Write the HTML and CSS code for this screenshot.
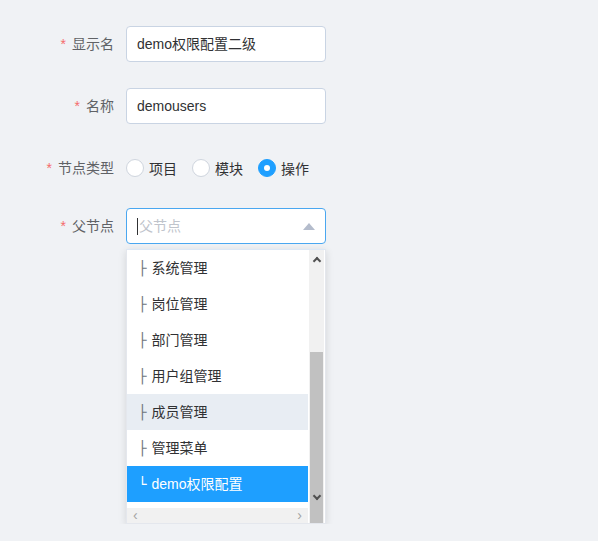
FILE: index.html
```html
<!DOCTYPE html>
<html lang="zh">
<head>
<meta charset="utf-8">
<link rel="stylesheet" href="styles.css">
</head>
<body>
<div class="form">
  <div class="row r1">
    <label class="label"><span class="req">*</span>显示名</label>
    <div class="input">demo权限配置二级</div>
  </div>
  <div class="row r2">
    <label class="label"><span class="req">*</span>名称</label>
    <div class="input">demousers</div>
  </div>
  <div class="row r3">
    <label class="label"><span class="req">*</span>节点类型</label>
    <div class="radios">
      <span class="radio"><span class="circle"></span>项目</span>
      <span class="radio"><span class="circle"></span>模块</span>
      <span class="radio checked"><span class="circle"></span>操作</span>
    </div>
  </div>
  <div class="row r4">
    <label class="label"><span class="req">*</span>父节点</label>
    <div class="input select"><span class="caret"></span><span class="ph">父节点</span><span class="tri"></span></div>
  </div>
  <div class="panel">
    <div class="panel-body">
      <div class="list">
        <div class="item"><span class="br">├</span>系统管理</div>
        <div class="item"><span class="br">├</span>岗位管理</div>
        <div class="item"><span class="br">├</span>部门管理</div>
        <div class="item"><span class="br">├</span>用户组管理</div>
        <div class="item hover"><span class="br">├</span>成员管理</div>
        <div class="item"><span class="br">├</span>管理菜单</div>
        <div class="item selected"><span class="br">└</span>demo权限配置</div>
        <div class="pad"></div>
        <div class="hbar"><span class="arr">‹</span><span class="arr">›</span></div>
      </div>
      <div class="vbar">
        <span class="up"></span>
        <span class="vthumb"></span>
        <span class="down"></span>
      </div>
    </div>
  </div>
</div>
</body>
</html>
```
FILE: styles.css
```css
html, body {
  margin: 0;
  padding: 0;
  background: #f0f2f5;
  font-family: "Liberation Sans", "Noto Sans CJK SC", sans-serif;
  font-size: 14px;
  color: #606266;
}
.form {
  padding-top: 26px;
}
.row {
  display: flex;
  align-items: center;
}
.r2 { margin-top: 26px; }
.r3 { margin-top: 26px; height: 36px; }
.r4 { margin-top: 22px; }
.label {
  width: 126px;
  padding-right: 12px;
  box-sizing: border-box;
  text-align: right;
  color: #606266;
  line-height: 36px;
}
.req {
  color: #f56c6c;
  margin-right: 6px;
}
.input {
  width: 200px;
  height: 36px;
  box-sizing: border-box;
  border: 1px solid #c9d4e3;
  border-radius: 4px;
  background: #fff;
  padding: 0 10px;
  line-height: 34px;
  color: #303133;
}
.radios {
  display: flex;
  align-items: center;
}
.radio {
  display: flex;
  align-items: center;
  margin-right: 15px;
  color: #303133;
}
.circle {
  width: 16px;
  height: 16px;
  border: 1px solid #cfd5de;
  border-radius: 50%;
  background: #fff;
  margin-right: 5px;
  position: relative;
}
.checked .circle {
  background: #1e9fff;
  border-color: #1e9fff;
}
.checked .circle::after {
  content: "";
  position: absolute;
  left: 5px;
  top: 5px;
  width: 6px;
  height: 6px;
  border-radius: 50%;
  background: #fff;
}
.select {
  border-color: #4aa7f0;
  display: flex;
  align-items: center;
}
.caret {
  width: 1px;
  height: 17px;
  background: #303133;
}
.ph {
  color: #c0c4cc;
  margin-left: 1px;
  flex: 1;
}
.tri {
  width: 0;
  height: 0;
  border-left: 6px solid transparent;
  border-right: 6px solid transparent;
  border-bottom: 7px solid #b4bccc;
}
.panel {
  margin-left: 126px;
  margin-top: 5px;
  width: 200px;
  height: 275px;
  box-sizing: border-box;
  border: 1px solid #e4e7ed;
  border-top-color: #dde8f5;
  background: #fff;
  box-shadow: 0 2px 8px rgba(0, 0, 0, 0.12);
  overflow: hidden;
}
.panel-body {
  display: flex;
  height: 273px;
}
.list {
  width: 181px;
  display: flex;
  flex-direction: column;
}
.item {
  height: 36px;
  line-height: 36px;
  padding-left: 11px;
  color: #303133;
  white-space: nowrap;
  flex: none;
}
.br {
  font-family: "DejaVu Sans", sans-serif;
  color: #6f757d;
  margin-right: 5px;
}
.hover {
  background: #e8edf3;
}
.selected {
  background: #1e9fff;
  color: #fff;
}
.selected .br {
  color: #fff;
}
.pad {
  height: 6px;
  flex: none;
}
.hbar {
  height: 15px;
  flex: none;
  background: #f1f1f1;
  display: flex;
  justify-content: space-between;
  align-items: center;
  padding: 0 6px;
  color: #a3a3a3;
  font-size: 14px;
  line-height: 15px;
}
.vbar {
  width: 15px;
  margin-left: 1px;
  background: #f1f1f1;
  display: flex;
  flex-direction: column;
  align-items: center;
  position: relative;
}
.vthumb {
  margin-top: 102px;
  width: 13px;
  flex: 1;
  background: #c1c1c1;
}
.up, .down {
  position: absolute;
  left: 5px;
  width: 4px;
  height: 4px;
  border-left: 2px solid #505050;
  border-top: 2px solid #505050;
}
.up {
  top: 8px;
  transform: rotate(45deg);
}
.down {
  top: 243px;
  transform: rotate(225deg);
}
```
